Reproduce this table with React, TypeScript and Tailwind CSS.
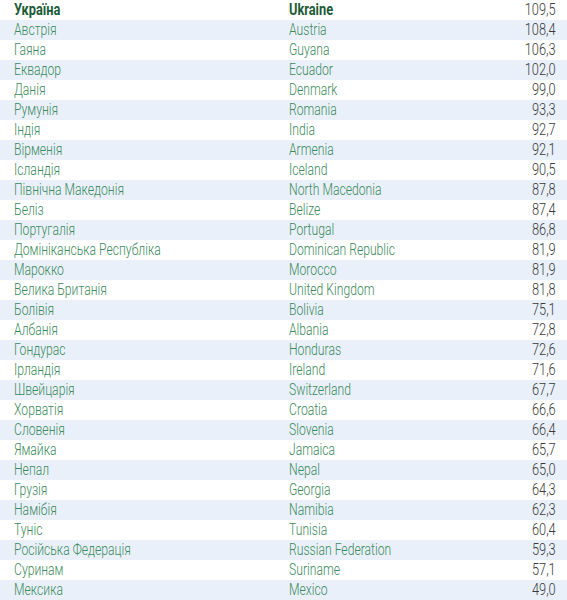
const rows: [string, string, string][] = [
  ["Австрія", "Austria", "108,4"],
  ["Гаяна", "Guyana", "106,3"],
  ["Еквадор", "Ecuador", "102,0"],
  ["Данія", "Denmark", "99,0"],
  ["Румунія", "Romania", "93,3"],
  ["Індія", "India", "92,7"],
  ["Вірменія", "Armenia", "92,1"],
  ["Ісландія", "Iceland", "90,5"],
  ["Північна Македонія", "North Macedonia", "87,8"],
  ["Беліз", "Belize", "87,4"],
  ["Португалія", "Portugal", "86,8"],
  ["Домініканська Республіка", "Dominican Republic", "81,9"],
  ["Марокко", "Morocco", "81,9"],
  ["Велика Британія", "United Kingdom", "81,8"],
  ["Болівія", "Bolivia", "75,1"],
  ["Албанія", "Albania", "72,8"],
  ["Гондурас", "Honduras", "72,6"],
  ["Ірландія", "Ireland", "71,6"],
  ["Швейцарія", "Switzerland", "67,7"],
  ["Хорватія", "Croatia", "66,6"],
  ["Словенія", "Slovenia", "66,4"],
  ["Ямайка", "Jamaica", "65,7"],
  ["Непал", "Nepal", "65,0"],
  ["Грузія", "Georgia", "64,3"],
  ["Намібія", "Namibia", "62,3"],
  ["Туніс", "Tunisia", "60,4"],
  ["Російська Федерація", "Russian Federation", "59,3"],
  ["Суринам", "Suriname", "57,1"],
  ["Мексика", "Mexico", "49,0"],
];

export default function App() {
  return (
    <div
      className="w-[567px] h-[600px] bg-white overflow-hidden text-[16px] leading-[20px] font-light"
      style={{ fontFamily: 'Roboto, "Noto Sans", sans-serif' }}
    >
      <div className="flex h-[20px] text-[#1d5c37]">
        <div className="w-[289px] pl-[14px]">
          <span className="inline-block origin-left scale-x-[0.8] font-bold">Україна</span>
        </div>
        <div className="flex-1">
          <span className="inline-block origin-left scale-x-[0.8] font-bold">Ukraine</span>
        </div>
        <div className="pr-[11px] text-[#3a3a3a]">
          <span className="inline-block origin-right scale-x-[0.8]">109,5</span>
        </div>
      </div>
      {rows.map(([ua, en, v], i) => (
        <div key={i} className={`flex h-[20px] ${i % 2 === 0 ? "bg-[#e9f0fa]" : "bg-white"}`}>
          <div className="w-[289px] pl-[14px] text-[#3b8a5b] whitespace-nowrap">
            <span className="inline-block origin-left scale-x-[0.76]">{ua}</span>
          </div>
          <div className="flex-1 text-[#3b8a5b] whitespace-nowrap">
            <span className="inline-block origin-left scale-x-[0.76]">{en}</span>
          </div>
          <div className="pr-[11px] text-[#3a3a3a]">
            <span className="inline-block origin-right scale-x-[0.8]">{v}</span>
          </div>
        </div>
      ))}
    </div>
  );
}
